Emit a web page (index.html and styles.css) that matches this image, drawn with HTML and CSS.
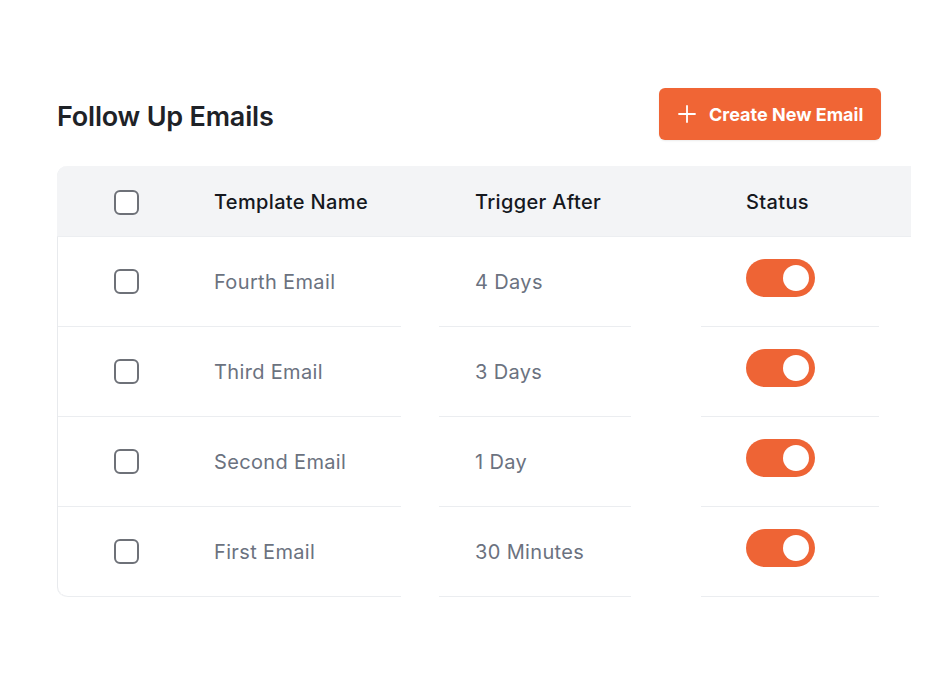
FILE: index.html
```html
<!DOCTYPE html>
<html>
<head>
<meta charset="utf-8">
<link rel="stylesheet" href="styles.css">
</head>
<body>
<div class="page">
  <div class="top">
    <h1 class="title">Follow Up Emails</h1>
    <button class="create">
      <svg class="plus" width="18" height="18" viewBox="0 0 18 18"><path d="M9 1v16M1 9h16" stroke="#fff" stroke-width="1.8" stroke-linecap="round" fill="none"/></svg>
      <span>Create New Email</span>
    </button>
  </div>
  <div class="card">
    <div class="row head">
      <div class="cell c-name"><span class="box"></span><span>Template Name</span></div>
      <div class="gap"></div>
      <div class="cell c-trig">Trigger After</div>
      <div class="gap"></div>
      <div class="cell c-stat">Status</div>
      <div class="gap"></div>
    </div>
    <div class="row">
      <div class="cell c-name"><span class="box"></span><span>Fourth Email</span></div>
      <div class="gap"></div>
      <div class="cell c-trig">4 Days</div>
      <div class="gap"></div>
      <div class="cell c-stat"><span class="toggle"><span class="knob"></span></span></div>
      <div class="gap"></div>
    </div>
    <div class="row">
      <div class="cell c-name"><span class="box"></span><span>Third Email</span></div>
      <div class="gap"></div>
      <div class="cell c-trig">3 Days</div>
      <div class="gap"></div>
      <div class="cell c-stat"><span class="toggle"><span class="knob"></span></span></div>
      <div class="gap"></div>
    </div>
    <div class="row">
      <div class="cell c-name"><span class="box"></span><span>Second Email</span></div>
      <div class="gap"></div>
      <div class="cell c-trig">1 Day</div>
      <div class="gap"></div>
      <div class="cell c-stat"><span class="toggle"><span class="knob"></span></span></div>
      <div class="gap"></div>
    </div>
    <div class="row last">
      <div class="cell c-name"><span class="box"></span><span>First Email</span></div>
      <div class="gap"></div>
      <div class="cell c-trig">30 Minutes</div>
      <div class="gap"></div>
      <div class="cell c-stat"><span class="toggle"><span class="knob"></span></span></div>
      <div class="gap"></div>
    </div>
  </div>
</div>
</body>
</html>
```

FILE: styles.css
```css
html, body {
  margin: 0;
  padding: 0;
  background: #ffffff;
}
body {
  font-family: Inter, "Noto Sans", sans-serif;
}
.page {
  padding: 88px 0 0 57px;
}
.top {
  width: 824px;
  height: 52px;
  display: flex;
  align-items: center;
  justify-content: space-between;
}
.title {
  margin: 0;
  font-size: 27px;
  font-weight: 600;
  color: #1e2227;
  letter-spacing: -0.2px;
  padding-top: 5px;
}
.create {
  width: 222px;
  height: 52px;
  border: none;
  border-radius: 6px;
  background: #f06535;
  color: #ffffff;
  font-family: Inter, "Noto Sans", sans-serif;
  font-size: 18px;
  font-weight: 700;
  display: flex;
  align-items: center;
  gap: 13px;
  padding: 0 0 0 19px;
  box-shadow: 0 1px 2px rgba(0,0,0,0.08);
}
.plus {
  display: block;
}
.card {
  margin-top: 26px;
  width: 854px;
  border-left: 1px solid #e8eaed;
  border-radius: 10px 0 0 10px;
  box-sizing: border-box;
}
.row {
  display: grid;
  grid-template-columns: 343px 38px 192px 70px 178px 32px;
  height: 90px;
}
.row.head {
  height: 70px;
  background: #f3f4f6;
  border-bottom: 1px solid #eceef1;
  border-top-left-radius: 10px;
  margin-left: -1px;
  padding-left: 1px;
}
.cell {
  display: flex;
  align-items: center;
  font-size: 20px;
  letter-spacing: 0.35px;
  color: #6b7280;
  border-bottom: 1px solid #ebedf0;
}
.head .cell {
  border-bottom: none;
  color: #15181e;
  font-weight: 500;
  padding-top: 2px;
}
.last .c-name {
  border-bottom-left-radius: 10px;
}
.c-name {
  padding-left: 56px;
}
.c-trig {
  padding-left: 36px;
}
.c-stat {
  padding-left: 45px;
}
.box {
  width: 25px;
  height: 25px;
  box-sizing: border-box;
  border: 2px solid #6e7178;
  border-radius: 6px;
  margin-right: 75px;
  background: #fff;
}
.toggle {
  width: 69px;
  height: 38px;
  border-radius: 19px;
  background: #ee6435;
  display: flex;
  align-items: center;
  justify-content: flex-end;
  padding-right: 6px;
  box-sizing: border-box;
  margin-top: -8px;
}
.knob {
  width: 26px;
  height: 26px;
  border-radius: 50%;
  background: #ffffff;
}
```
